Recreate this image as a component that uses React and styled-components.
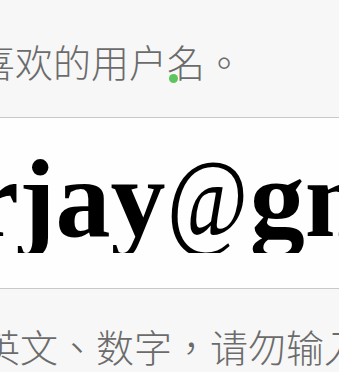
import React from "react";
import styled, { createGlobalStyle } from "styled-components";

const Global = createGlobalStyle`
  html, body { margin: 0; padding: 0; background: #f7f7f7; }
  body { width: 339px; height: 372px; overflow: hidden; }
`;

const Page = styled.div`
  width: 339px;
  height: 372px;
  display: flex;
  flex-direction: column;
  background: #f7f7f7;
  overflow: hidden;
`;

const Hint = styled.div`
  position: relative;
  height: ${(p) => p.$h}px;
  padding-top: ${(p) => p.$top}px;
  box-sizing: border-box;
  overflow: hidden;
  white-space: nowrap;
  font-family: "Noto Sans CJK TC", "Noto Sans CJK SC", sans-serif;
  font-size: 38px;
  line-height: 1;
  font-weight: 300;
  color: #6b6b6b;
  text-spacing-trim: space-all;
  font-feature-settings: normal;
`;

const HintText = styled.span`
  display: inline-block;
  margin-left: ${(p) => p.$shift}px;
`;

const Dot = styled.span`
  position: absolute;
  left: 169px;
  top: 74px;
  width: 9px;
  height: 9px;
  border-radius: 50%;
  background: #5cc55e;
`;

const InputBox = styled.div`
  height: 170px;
  background: #fefefe;
  border-top: 1px solid #c8c8c8;
  border-bottom: 1px solid #c8c8c8;
  overflow: hidden;
`;

const Clip = styled.div`
  height: 135px;
  overflow: hidden;
  white-space: nowrap;
`;

const Entered = styled.div`
  margin-left: ${(p) => p.$shift}px;
  padding-top: 26px;
  font-family: "Liberation Serif", "Times New Roman", serif;
  font-weight: 700;
  font-size: 110px;
  line-height: 1;
  color: #000;
`;

const At = styled.span`
  display: inline-block;
  font-weight: 400;
  transform: scaleX(0.8);
  transform-origin: left center;
  margin-right: -19px;
  margin-left: 2px;
`;

export default function App() {
  return (
    <Page>
      <Global />
      <Hint $h={117} $top={42}>
        <HintText $shift={-23}>喜欢的用户名。</HintText>
        <Dot />
      </Hint>
      <InputBox>
        <Clip>
          <Entered $shift={-30}>
            rjay<At>@</At>gmail.com
          </Entered>
        </Clip>
      </InputBox>
      <Hint $h={83} $top={38}>
        <HintText $shift={-18}>英文、数字，请勿输入</HintText>
      </Hint>
    </Page>
  );
}
